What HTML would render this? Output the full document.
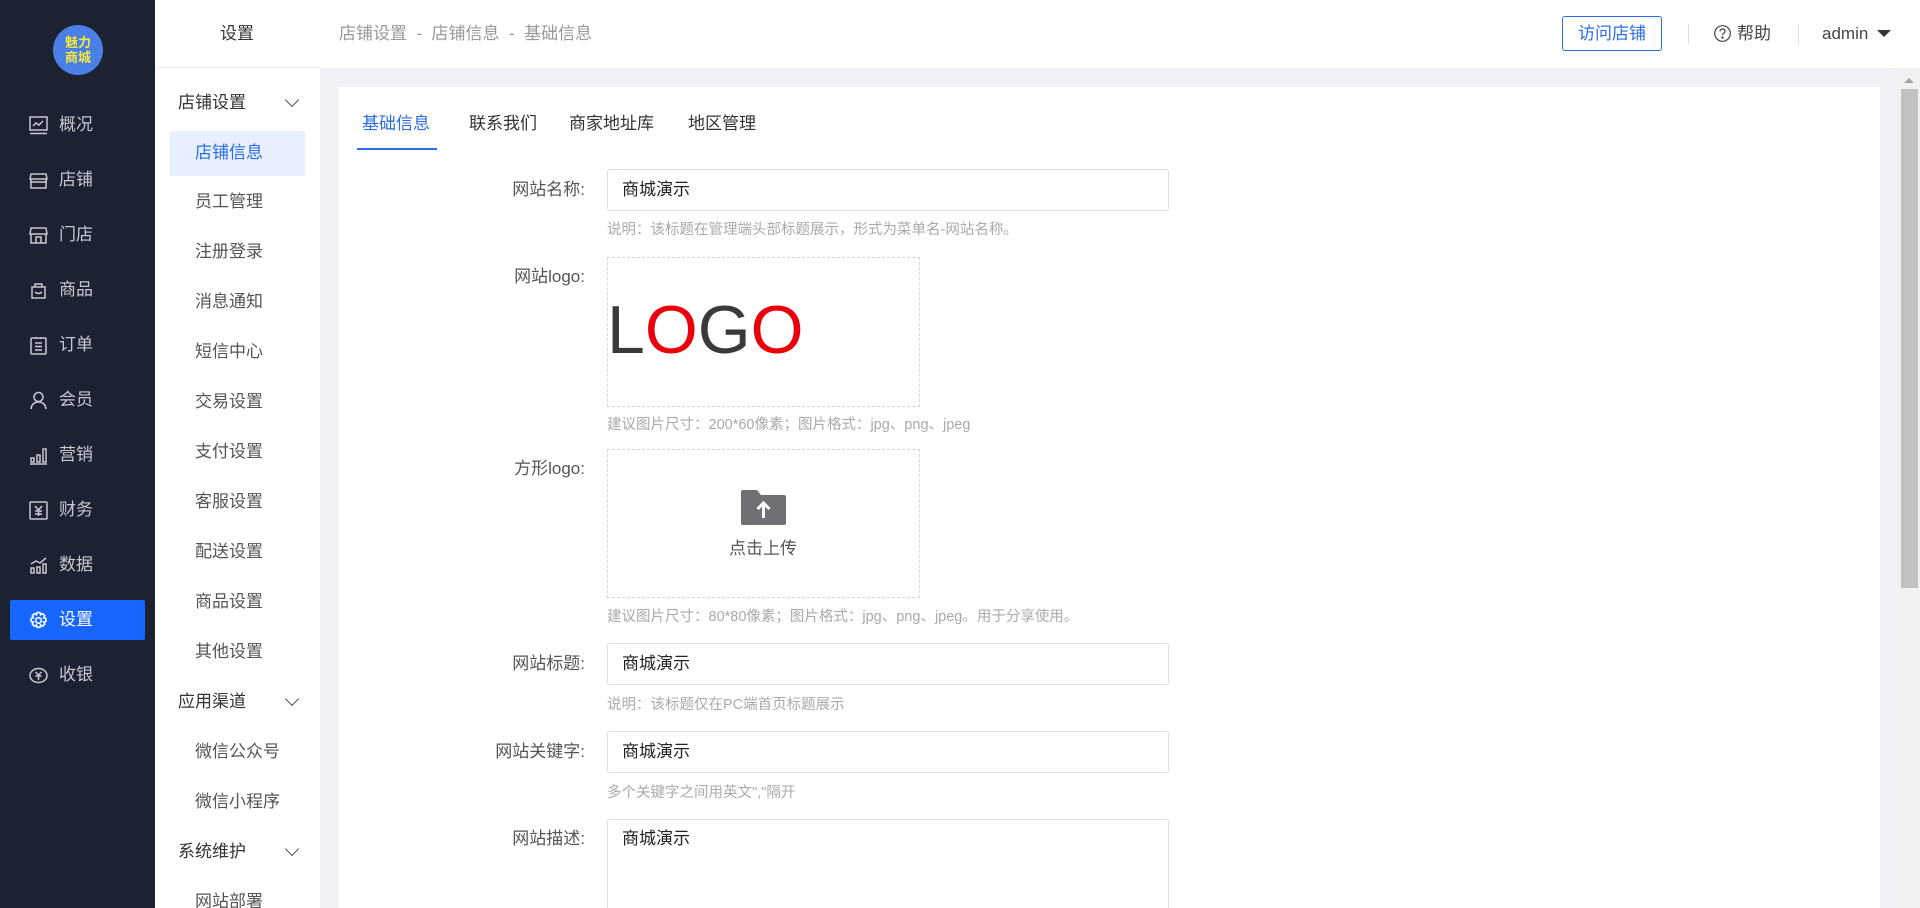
<!DOCTYPE html>
<html style="width:1920px;height:908px;overflow:hidden"><head><meta charset="utf-8">
<style>
*{margin:0;padding:0;box-sizing:border-box}
body{width:1920px;height:908px;overflow:hidden;background:#f0f2f5;font-family:"Liberation Sans","Noto Sans CJK SC",sans-serif;position:relative;color:#333}
.a{position:absolute;white-space:nowrap}
#side{left:0;top:0;width:155px;height:908px;background:#1d2232}
.logo{left:53px;top:25px;width:50px;height:50px;border-radius:50%;background:#4a7fe6;color:#f7e93b;font-weight:bold;font-size:13px;line-height:15px;text-align:center;padding-top:10px}
.mi{left:0;width:155px;height:40px;color:#c5c8d0;font-size:17px;line-height:40px}
.mi svg{position:absolute;left:29px;top:11px}
.mi span{position:absolute;left:59px}
.mi.on{left:10px;width:135px;background:#1766ff;color:#fff;border-radius:2px}
.mi.on svg{left:19px}.mi.on span{left:49px}
#sub{left:155px;top:0;width:165px;height:908px;background:#fff}
.st{font-size:17px;color:#333;line-height:24px}
.sg{font-size:17px;color:#333;left:178px;line-height:24px}
.si{font-size:17px;color:#555;left:195px;line-height:24px}
.chev{left:287px;width:10px;height:10px;border-right:1.5px solid #555;border-bottom:1.5px solid #555;transform:rotate(45deg)}
#top{left:320px;top:0;width:1600px;height:68px;background:#fff}
.card{left:339px;top:87px;width:1541px;height:821px;background:#fff}
.lab{font-size:17px;color:#555;right:1335px;line-height:24px}
.inp{left:607px;width:562px;border:1px solid #dcdfe6;border-radius:3px;background:#fff;font-size:17px;color:#222;padding-left:14px}
.help{left:607px;font-size:14.5px;color:#aaa;line-height:20px}
.dash{left:607px;width:313px;border:1px dashed #d6d6d6}
</style></head><body>
<div id="side" class="a">
<div class="a logo">魅力<br>商城</div>
<div class="a mi" style="top:105px"><svg width="19" height="19" viewBox="0 0 19 19" fill="none" stroke="#c5c8d0" stroke-width="1.5"><rect x="1" y="1" width="17" height="13"/><path d="M1 17.5h17M4 10l3-3 3 2 4-4"/></svg><span>概况</span></div>
<div class="a mi" style="top:160px"><svg width="19" height="19" viewBox="0 0 19 19" fill="none" stroke="#c5c8d0" stroke-width="1.5"><path d="M2 3h15l1 5H1z M2 8v9h15V8M1 11h17"/></svg><span>店铺</span></div>
<div class="a mi" style="top:215px"><svg width="19" height="19" viewBox="0 0 19 19" fill="none" stroke="#c5c8d0" stroke-width="1.5"><path d="M2 2h15l1 6H1z M2 8v9h15V8M7 17v-6h5v6"/></svg><span>门店</span></div>
<div class="a mi" style="top:270px"><svg width="19" height="19" viewBox="0 0 19 19" fill="none" stroke="#c5c8d0" stroke-width="1.5"><path d="M3 6h13v11H3z M6 6V3h7v3M6 11q3.5 3 7 0"/></svg><span>商品</span></div>
<div class="a mi" style="top:325px"><svg width="19" height="19" viewBox="0 0 19 19" fill="none" stroke="#c5c8d0" stroke-width="1.5"><rect x="2" y="2" width="15" height="16" rx="1"/><path d="M6 7h7M6 10.5h7M6 14h7M7 1v2M12 1v2"/></svg><span>订单</span></div>
<div class="a mi" style="top:380px"><svg width="19" height="19" viewBox="0 0 19 19" fill="none" stroke="#c5c8d0" stroke-width="1.6"><circle cx="9.5" cy="6" r="4.5"/><path d="M2 18q1-7 7.5-7t7.5 7"/></svg><span>会员</span></div>
<div class="a mi" style="top:435px"><svg width="19" height="19" viewBox="0 0 19 19" fill="none" stroke="#c5c8d0" stroke-width="1.5"><path d="M1 18h17M2 16v-4h3v4zM8 16V9h3v7zM14 16V3h3v13z"/></svg><span>营销</span></div>
<div class="a mi" style="top:490px"><svg width="19" height="19" viewBox="0 0 19 19" fill="none" stroke="#c5c8d0" stroke-width="1.5"><rect x="1" y="1" width="17" height="17" rx="1"/><path d="M6 5l3.5 4L13 5M9.5 9v6M6 10h7M6 13h7"/></svg><span>财务</span></div>
<div class="a mi" style="top:545px"><svg width="19" height="19" viewBox="0 0 19 19" fill="none" stroke="#c5c8d0" stroke-width="1.5"><path d="M2 17v-5h3v5zM8 17v-6h3v6zM14 17V8h3v9zM2 8l5-3 4 2 6-5"/></svg><span>数据</span></div>
<div class="a mi on" style="top:600px"><svg width="19" height="19" viewBox="0 0 19 19" fill="none" stroke="#fff" stroke-width="1.6"><path d="M8 1.5h3l.6 2.3 2-1.2 2.2 2.2-1.2 2 2.3.6v3l-2.3.6 1.2 2-2.2 2.2-2-1.2-.6 2.3H8l-.6-2.3-2 1.2-2.2-2.2 1.2-2-2.3-.6v-3l2.3-.6-1.2-2 2.2-2.2 2 1.2z"/><circle cx="9.5" cy="9.5" r="2.8"/></svg><span>设置</span></div>
<div class="a mi" style="top:655px"><svg width="19" height="19" viewBox="0 0 19 19" fill="none" stroke="#c5c8d0" stroke-width="1.5"><ellipse cx="9.5" cy="9.5" rx="8.5" ry="7"/><path d="M6.5 6l3 3 3-3M9.5 9v5M6.5 10h6"/></svg><span>收银</span></div>
</div>

<div id="sub" class="a">
<div class="a st" style="left:65px;top:22px">设置</div>
<div class="a" style="left:0;top:67px;width:165px;height:1px;background:#eee"></div>
<div class="a" style="left:15px;top:131px;width:135px;height:45px;background:#e8f0fe"></div>
</div>
<div class="a sg" style="top:91px">店铺设置</div><div class="a chev" style="top:95px"></div>
<div class="a si" style="top:141px;color:#2b6de5">店铺信息</div>
<div class="a si" style="top:190px">员工管理</div>
<div class="a si" style="top:240px">注册登录</div>
<div class="a si" style="top:290px">消息通知</div>
<div class="a si" style="top:340px">短信中心</div>
<div class="a si" style="top:390px">交易设置</div>
<div class="a si" style="top:440px">支付设置</div>
<div class="a si" style="top:490px">客服设置</div>
<div class="a si" style="top:540px">配送设置</div>
<div class="a si" style="top:590px">商品设置</div>
<div class="a si" style="top:640px">其他设置</div>
<div class="a sg" style="top:690px">应用渠道</div><div class="a chev" style="top:694px"></div>
<div class="a si" style="top:740px">微信公众号</div>
<div class="a si" style="top:790px">微信小程序</div>
<div class="a sg" style="top:840px">系统维护</div><div class="a chev" style="top:844px"></div>
<div class="a si" style="top:890px">网站部署</div>

<div id="top" class="a"></div>
<div class="a" style="left:339px;top:22px;font-size:17px;color:#999;line-height:24px">店铺设置&nbsp;&nbsp;-&nbsp;&nbsp;店铺信息&nbsp;&nbsp;-&nbsp;&nbsp;基础信息</div>
<div class="a" style="left:1562px;top:16px;width:100px;height:35px;border:1px solid #2b6de5;border-radius:3px;color:#2b6de5;font-size:17px;line-height:33px;text-align:center">访问店铺</div>
<div class="a" style="left:1688px;top:24px;width:1px;height:20px;background:#ddd"></div>
<svg class="a" style="left:1714px;top:25px" width="17" height="17" viewBox="0 0 17 17" fill="none" stroke="#444" stroke-width="1.2"><circle cx="8.5" cy="8.5" r="7.8"/><path d="M6 6.5q0-2.5 2.5-2.5T11 6.3q0 1.4-1.6 2.2-.9.5-.9 1.8"/><circle cx="8.5" cy="12.6" r=".6" fill="#444"/></svg>
<div class="a" style="left:1737px;top:22px;font-size:17px;color:#444;line-height:24px">帮助</div>
<div class="a" style="left:1798px;top:24px;width:1px;height:20px;background:#ddd"></div>
<div class="a" style="left:1822px;top:22px;font-size:17px;color:#444;line-height:24px">admin</div>
<div class="a" style="left:1877px;top:30px;width:0;height:0;border-left:7px solid transparent;border-right:7px solid transparent;border-top:7px solid #333"></div>

<div class="a card"></div>
<div class="a" style="left:1898px;top:68px;width:22px;height:840px;background:#f1f1f1"></div>
<div class="a" style="left:1904px;top:78px;width:0;height:0;border-left:5px solid transparent;border-right:5px solid transparent;border-bottom:5px solid #a3a3a3"></div>
<div class="a" style="left:1901px;top:89px;width:17px;height:499px;background:#c1c1c1"></div>

<div class="a" style="left:362px;top:112px;font-size:17px;color:#2b6de5;line-height:24px">基础信息</div>
<div class="a" style="left:469px;top:112px;font-size:17px;color:#333;line-height:24px">联系我们</div>
<div class="a" style="left:569px;top:112px;font-size:17px;color:#333;line-height:24px">商家地址库</div>
<div class="a" style="left:688px;top:112px;font-size:17px;color:#333;line-height:24px">地区管理</div>
<div class="a" style="left:357px;top:148px;width:80px;height:2px;background:#2b6de5"></div>

<div class="a lab" style="top:178px">网站名称:</div>
<div class="a inp" style="top:169px;height:42px;line-height:40px">商城演示</div>
<div class="a help" style="top:220px">说明：该标题在管理端头部标题展示，形式为菜单名-网站名称。</div>

<div class="a lab" style="top:265px">网站logo:</div>
<div class="a dash" style="top:257px;height:150px"></div>
<div class="a" style="left:607px;top:290px;font-size:68px;line-height:80px;color:#3a3a3a;letter-spacing:0px">L<span style="color:#e8000b">O</span>G<span style="color:#e8000b">O</span></div>
<div class="a help" style="top:415px">建议图片尺寸：200*60像素；图片格式：jpg、png、jpeg</div>

<div class="a lab" style="top:457px">方形logo:</div>
<div class="a dash" style="top:449px;height:149px"></div>
<svg class="a" style="left:741px;top:488px" width="45" height="38" viewBox="0 0 45 38"><path d="M2 2h14l4 5h23q2 0 2 2v26q0 2-2 2H2q-2 0-2-2V4q0-2 2-2z" fill="#6e7073"/><path d="M22.5 30V15M16.5 21l6-6 6 6" stroke="#fff" stroke-width="3" fill="none"/></svg>
<div class="a" style="left:729px;top:537px;font-size:17px;color:#555;line-height:24px">点击上传</div>
<div class="a help" style="top:607px">建议图片尺寸：80*80像素；图片格式：jpg、png、jpeg。用于分享使用。</div>

<div class="a lab" style="top:652px">网站标题:</div>
<div class="a inp" style="top:643px;height:42px;line-height:40px">商城演示</div>
<div class="a help" style="top:695px">说明：该标题仅在PC端首页标题展示</div>

<div class="a lab" style="top:740px">网站关键字:</div>
<div class="a inp" style="top:731px;height:42px;line-height:40px">商城演示</div>
<div class="a help" style="top:783px">多个关键字之间用英文","隔开</div>

<div class="a lab" style="top:827px">网站描述:</div>
<div class="a inp" style="top:819px;height:95px;line-height:24px;padding-top:7px">商城演示</div>
</body></html>
